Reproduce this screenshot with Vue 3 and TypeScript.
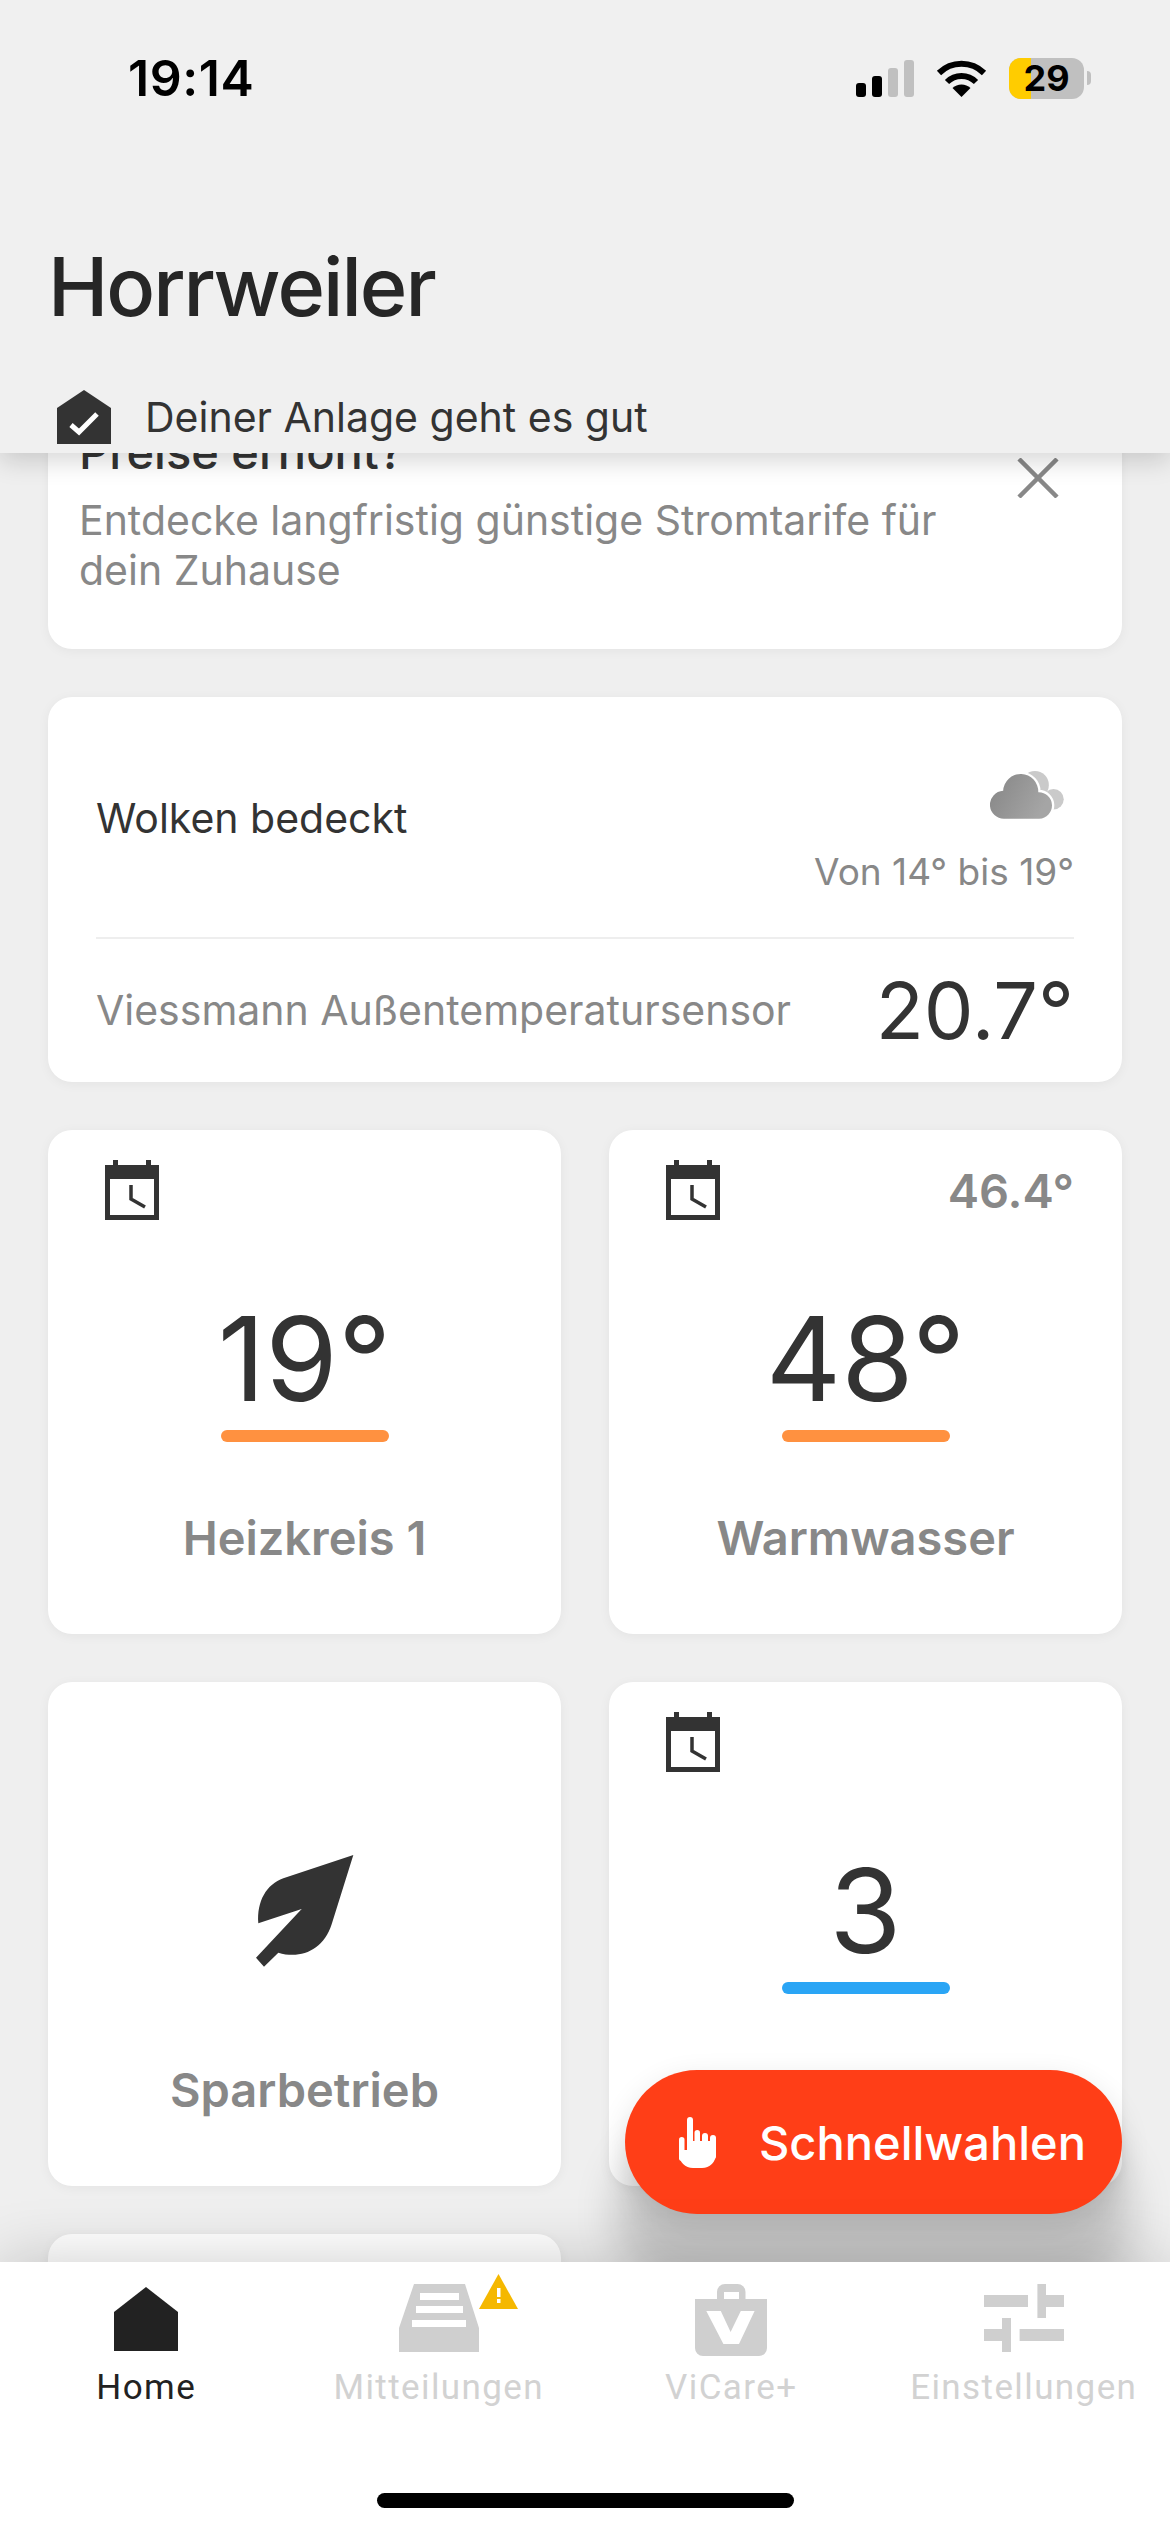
<script setup lang="ts">
interface Tile {
  schedule?: boolean
  reading?: string
  value?: string
  barColor?: string
  leaf?: boolean
  label?: string
}

const tiles: Tile[] = [
  { schedule: true, value: '19°', barColor: '#ff9140', label: 'Heizkreis 1' },
  { schedule: true, reading: '46.4°', value: '48°', barColor: '#ff9140', label: 'Warmwasser' },
  { leaf: true, label: 'Sparbetrieb' },
  { schedule: true, value: '3', barColor: '#2aa5f5' },
  {},
]

const signalBars = [
  { height: 14, on: true },
  { height: 21, on: true },
  { height: 29, on: false },
  { height: 37, on: false },
]
</script>

<template>
  <div class="screen">
    <header class="header">
      <div class="status">
        <span class="time">19:14</span>
        <div class="status-icons">
          <div class="signal">
            <span
              v-for="(bar, i) in signalBars"
              :key="i"
              class="signal-bar"
              :class="{ on: bar.on }"
              :style="{ height: bar.height + 'px' }"
            ></span>
          </div>
          <svg class="wifi" width="51" height="37" viewBox="0 0 51 37">
            <path d="M3 13A32 32 0 0 1 48 13" fill="none" stroke="#000" stroke-width="6" />
            <path d="M11 22A20.500 20.500 0 0 1 40 22" fill="none" stroke="#000" stroke-width="6" />
            <path d="M25.500 37L16.500 28A13 13 0 0 1 34.500 28Z" fill="#000" />
          </svg>
          <div class="battery">
            <span class="battery-fill"></span>
            <span class="battery-text">29</span>
          </div>
          <span class="battery-tip"></span>
        </div>
      </div>
      <h1 class="title">Horrweiler</h1>
      <div class="health">
        <svg width="54" height="54" viewBox="0 0 54 54">
          <path d="M27 0L54 18V54H0V18Z" fill="#333" />
          <path d="M14 35L22 42L40 24" fill="none" stroke="#fff" stroke-width="5" />
        </svg>
        <span>Deiner Anlage geht es gut</span>
      </div>
    </header>

    <main class="content">
      <section class="card promo">
        <div class="promo-text">
          <div class="promo-title">Preise erhöht?</div>
          <p class="promo-body">Entdecke langfristig günstige Stromtarife für dein Zuhause</p>
        </div>
        <svg class="close" width="42" height="40" viewBox="0 0 42 40">
          <path d="M2 1L40 39M40 1L2 39" fill="none" stroke="#888" stroke-width="4.500" />
        </svg>
      </section>

      <section class="card weather">
        <div class="weather-top">
          <span class="weather-name">Wolken bedeckt</span>
          <div class="weather-side">
            <svg width="74" height="48" viewBox="147 93 222 145">
              <defs>
                <linearGradient id="cloud-front" x1="0" y1="0" x2="1" y2="0.4">
                  <stop offset="0" stop-color="#858585" />
                  <stop offset="1" stop-color="#a5a5a5" />
                </linearGradient>
              </defs>
              <circle cx="282" cy="135" r="42" fill="#cacaca" />
              <circle cx="338" cy="178" r="31" fill="#cacaca" />
              <path d="M190 237a42 42 0 0 1 -4 -84a50 50 0 0 1 106 4a40 40 0 0 1 3 80Z" fill="#fff" stroke="#fff" stroke-width="14" />
              <path d="M190 237a42 42 0 0 1 -4 -84a50 50 0 0 1 106 4a40 40 0 0 1 3 80Z" fill="url(#cloud-front)" />
            </svg>
            <span class="weather-range">Von 14° bis 19°</span>
          </div>
        </div>
        <div class="weather-bottom">
          <span class="sensor">Viessmann Außentemperatursensor</span>
          <span class="outside">20.7°</span>
        </div>
      </section>

      <div class="tiles">
        <section v-for="(tile, i) in tiles" :key="i" class="card tile">
          <div class="tile-top">
            <svg v-if="tile.schedule" width="54" height="60" viewBox="0 0 54 60">
              <path d="M0 5H8V0H13V5H41V0H46V5H54V60H0ZM5 19V55H49V19Z" fill="#333" fill-rule="evenodd" />
              <path d="M26 25V39L40 47" fill="none" stroke="#333" stroke-width="3.500" />
            </svg>
            <span v-if="tile.reading" class="reading">{{ tile.reading }}</span>
          </div>
          <svg v-if="tile.leaf" class="leaf" width="98" height="112" viewBox="168 222 294 336">
            <path d="M460 222L250 292C200 310 170 360 175 427L305 384L168 530L192 557L235 515C300 535 370 510 395 430Z" fill="#333" />
          </svg>
          <template v-if="tile.value">
            <div class="value">{{ tile.value }}</div>
            <div class="bar" :style="{ background: tile.barColor }"></div>
          </template>
          <div v-if="tile.label" class="tile-label" :class="{ 'after-leaf': tile.leaf }">{{ tile.label }}</div>
        </section>
      </div>
    </main>

    <button class="fab">
      <svg width="37" height="51" viewBox="0 0 37 51">
        <g fill="#fff">
          <rect x="0" y="20" width="5.500" height="24" rx="2.750" />
          <rect x="8" y="0" width="6" height="40" rx="3" />
          <rect x="15.500" y="13" width="5.500" height="24" rx="2.750" />
          <rect x="23" y="16" width="6" height="24" rx="3" />
          <rect x="31" y="18" width="6" height="24" rx="3" />
          <path d="M0 33H8V24H37V37A14 14 0 0 1 23 51H14A14 14 0 0 1 0 37Z" />
        </g>
      </svg>
      <span>Schnellwahlen</span>
    </button>

    <nav class="nav">
      <div class="nav-row">
        <div class="nav-item active">
          <div class="nav-icon">
            <svg class="home-icon" width="64" height="64" viewBox="0 0 64 64">
              <path d="M32 0L64 25V64H0V25Z" fill="#222" />
            </svg>
          </div>
          <span>Home</span>
        </div>
        <div class="nav-item">
          <div class="nav-icon">
            <svg width="80" height="68" viewBox="0 0 80 68">
              <path d="M15 0H66L80 44V68H0V44ZM21 9V16H60V9ZM17 22V29H64V22ZM13 36V43H67V36Z" fill="#cfcfcf" fill-rule="evenodd" />
            </svg>
            <svg class="warn" width="39" height="35" viewBox="0 0 39 35">
              <path d="M19.500 0L39 35H0Z" fill="#f5b800" />
              <path d="M18 14H21.500V23H18ZM18 25H21.500V29H18Z" fill="#fff" />
            </svg>
          </div>
          <span>Mitteilungen</span>
        </div>
        <div class="nav-item">
          <div class="nav-icon">
            <svg width="72" height="72" viewBox="0 0 72 72">
              <path d="M22 15V8A8 8 0 0 1 30 0H42.500A8 8 0 0 1 50.500 8V15H72V64A8 8 0 0 1 64 72H8A8 8 0 0 1 0 64V15ZM29 8V15H44V8Z" fill="#cfcfcf" fill-rule="evenodd" />
              <path d="M11.300 27H25.800L35.600 48L45.800 27H59.600L44 60H28.400Z" fill="#fff" />
            </svg>
          </div>
          <span>ViCare+</span>
        </div>
        <div class="nav-item">
          <div class="nav-icon">
            <svg width="80" height="68" viewBox="0 0 80 68">
              <path d="M0 11H44V23H0ZM53.400 0H62V11H80V23H62V34H53.400ZM0 45H18V34H27V68H18V57H0ZM35.600 45H80V57H35.600Z" fill="#cfcfcf" />
            </svg>
          </div>
          <span>Einstellungen</span>
        </div>
      </div>
      <div class="home-bar"></div>
    </nav>
  </div>
</template>

<style scoped>
.screen {
  position: relative;
  display: flex;
  flex-direction: column;
  width: 1170px;
  height: 2532px;
  overflow: hidden;
  background: #efefef;
  font-family: Inter, "Liberation Sans", sans-serif;
  color: #333;
}

.header {
  position: relative;
  z-index: 2;
  flex: none;
  height: 453px;
  box-sizing: border-box;
  padding-top: 48px;
  background: #f0f0f0;
  box-shadow: 0 8px 24px rgba(0, 0, 0, 0.16);
}

.status {
  display: flex;
  align-items: center;
  justify-content: space-between;
  height: 60px;
  padding: 0 79px 0 128px;
}

.time {
  font-size: 50px;
  font-weight: 600;
  letter-spacing: 0.600px;
  line-height: 60px;
  color: #000;
}

.status-icons {
  display: flex;
  align-items: center;
}

.signal {
  display: flex;
  align-items: flex-end;
  gap: 6px;
  height: 37px;
  margin-right: 22px;
}

.signal-bar {
  width: 10px;
  border-radius: 3px;
  background: #c0c0c0;
}

.signal-bar.on {
  background: #000;
}

.wifi {
  margin-right: 22px;
}

.battery {
  position: relative;
  width: 75px;
  height: 41px;
  border-radius: 12px;
  background: #c0c0c0;
}

.battery-fill {
  position: absolute;
  left: 0;
  top: 0;
  bottom: 0;
  width: 22px;
  border-radius: 12px 0 0 12px;
  background: #ffcc00;
}

.battery-text {
  position: relative;
  display: block;
  text-align: center;
  font-size: 36px;
  font-weight: 700;
  line-height: 41px;
  color: #000;
}

.battery-tip {
  width: 4px;
  height: 14px;
  margin-left: 3px;
  border-radius: 0 4px 4px 0;
  background: #c0c0c0;
}

.title {
  margin: 131px 0 0 48px;
  font-size: 81px;
  font-weight: 500;
  letter-spacing: -2px;
  line-height: 96px;
  color: #262626;
}

.health {
  display: flex;
  align-items: center;
  gap: 34px;
  margin: 55px 0 0 57px;
  font-size: 41px;
  line-height: 54px;
}

.content {
  flex: 1;
  min-height: 0;
  overflow: hidden;
  display: flex;
  flex-direction: column;
  gap: 48px;
  padding: 0 48px;
}

.card {
  flex: none;
  box-sizing: border-box;
  border-radius: 24px;
  background: #fff;
  box-shadow: 0 2px 12px rgba(0, 0, 0, 0.05);
}

.promo {
  display: flex;
  justify-content: space-between;
  margin-top: -53px;
  padding: 27px 63px 54px 31px;
}

.promo-title {
  font-size: 47px;
  font-weight: 500;
  line-height: 50px;
}

.promo-body {
  width: 890px;
  margin: 18px 0 0;
  font-size: 41px;
  line-height: 50px;
  color: #888;
}

.close {
  margin-top: 31px;
}

.weather {
  height: 385px;
  padding: 0 48px;
}

.weather-top {
  display: flex;
  justify-content: space-between;
  height: 242px;
  box-sizing: border-box;
  padding-top: 74px;
  border-bottom: 2px solid #eeeeee;
}

.weather-name {
  margin-top: 22px;
  font-size: 41px;
  line-height: 50px;
}

.weather-side {
  display: flex;
  flex-direction: column;
  align-items: flex-end;
}

.weather-side svg {
  margin-right: 10px;
}

.weather-range {
  margin-top: 30px;
  font-size: 37px;
  line-height: 46px;
  color: #888;
}

.weather-bottom {
  display: flex;
  align-items: center;
  justify-content: space-between;
  height: 141px;
}

.sensor {
  font-size: 41px;
  color: #888;
}

.outside {
  font-size: 79px;
}

.tiles {
  flex: none;
  display: grid;
  grid-template-columns: 1fr 1fr;
  gap: 48px;
}

.tile {
  display: flex;
  flex-direction: column;
  align-items: center;
  height: 504px;
  padding-top: 30px;
}

.tile-top {
  display: flex;
  align-items: center;
  justify-content: space-between;
  align-self: stretch;
  height: 60px;
  padding: 0 48px 0 57px;
}

.reading {
  font-size: 47px;
  font-weight: 600;
  color: #888;
}

.value {
  margin-top: 69px;
  font-size: 117px;
  line-height: 140px;
}

.bar {
  width: 168px;
  height: 12px;
  margin-top: 1px;
  border-radius: 6px;
}

.tile-label {
  margin-top: 66px;
  font-size: 47px;
  font-weight: 600;
  line-height: 60px;
  color: #888;
}

.leaf {
  margin-top: 83px;
}

.tile-label.after-leaf {
  margin-top: 93px;
}

.fab {
  position: absolute;
  z-index: 3;
  right: 48px;
  top: 2070px;
  display: flex;
  align-items: center;
  gap: 43px;
  width: 497px;
  height: 144px;
  box-sizing: border-box;
  padding: 0 0 0 54px;
  border: 0;
  border-radius: 72px;
  background: #ff3e17;
  box-shadow: 0 70px 40px 10px rgba(0, 0, 0, 0.17), 0 10px 30px rgba(0, 0, 0, 0.12);
  font-family: inherit;
  font-size: 47px;
  font-weight: 500;
  color: #fff;
}

.nav {
  position: relative;
  z-index: 4;
  flex: none;
  height: 270px;
  background: #fff;
  box-shadow: 0 0 60px rgba(0, 0, 0, 0.2);
}

.nav-row {
  display: grid;
  grid-template-columns: repeat(4, 1fr);
  padding-top: 22px;
}

.nav-item {
  display: flex;
  flex-direction: column;
  align-items: center;
  font-family: Roboto, sans-serif;
  font-size: 35px;
  letter-spacing: 1.400px;
  line-height: 40px;
  color: #d2d2d2;
}

.nav-item.active {
  color: #222;
}

.nav-icon {
  position: relative;
  display: flex;
  align-items: flex-start;
  height: 72px;
  margin-bottom: 12px;
}

.home-icon {
  margin-top: 3px;
}

.warn {
  position: absolute;
  left: 80px;
  top: -10px;
}

.home-bar {
  position: absolute;
  left: 377px;
  top: 231px;
  width: 417px;
  height: 15px;
  border-radius: 8px;
  background: #000;
}
</style>

<style>
html,
body {
  margin: 0;
  background: #efefef;
}
</style>
